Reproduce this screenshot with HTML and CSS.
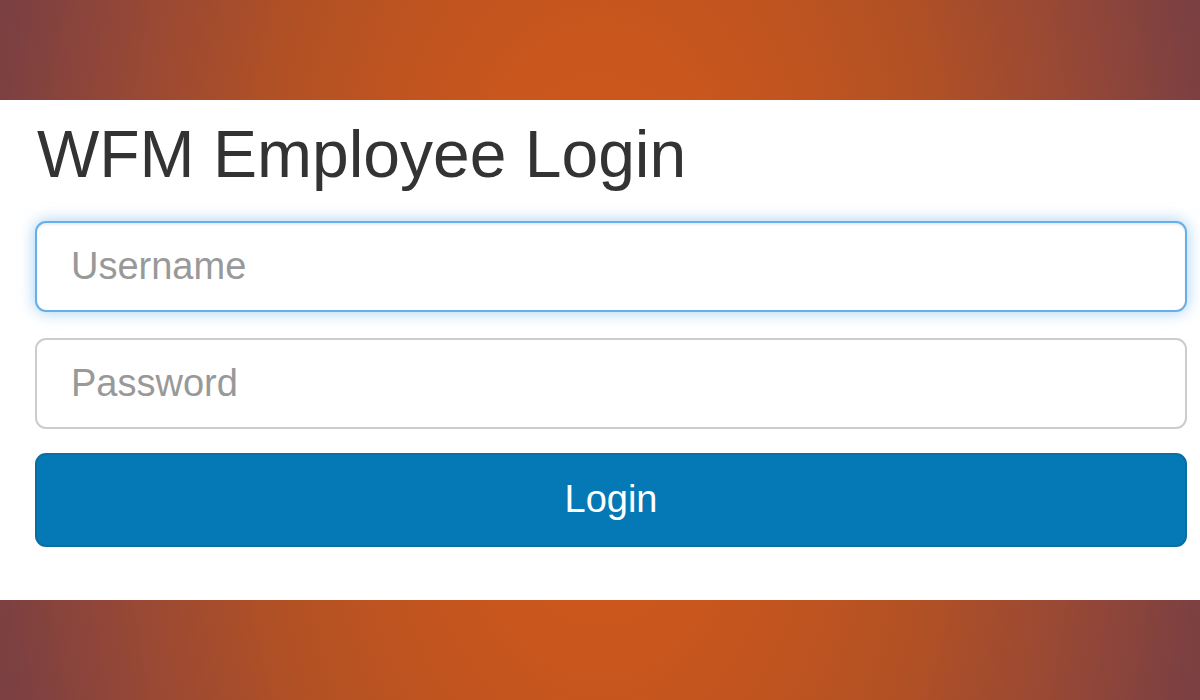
FILE: index.html
```html
<!DOCTYPE html>
<html lang="en">

<head>
  <meta charset="UTF-8">
  <meta name="viewport" content="width=device-width, initial-scale=1.0">
  <title>WFM Employee Login</title>
  <link rel="stylesheet" href="styles.css">
</head>

<body>
  <div class="page">
    <div class="login-box">
      <h2 class="login-title">WFM Employee Login</h2>
      <form class="login-form" onsubmit="return false">
        <input class="field is-focused" type="text" name="username" placeholder="Username" autofocus>
        <input class="field" type="password" name="password" placeholder="Password">
        <button class="login-btn" type="submit">Login</button>
      </form>
    </div>
  </div>
</body>

</html>
```

FILE: styles.css
```css
* {
  margin: 0;
  padding: 0;
  box-sizing: border-box;
}

body {
  font-family: "Liberation Sans", Arial, sans-serif;
  background: radial-gradient(ellipse 680px 1300px at 50% 50%, #d4591a 0%, #c8561d 25%, #b35124 50%, #974835 72%, #7c4042 90%, #784043 100%);
  height: 100vh;
  overflow: hidden;
}

.page {
  padding-top: 100px;
}

.login-box {
  background-color: #ffffff;
  height: 500px;
  padding: 18px 13px 0 35px;
}

.login-title {
  font-size: 66px;
  font-weight: normal;
  line-height: 1.1;
  color: #333333;
  padding-left: 2px;
  margin-bottom: 30px;
}

.login-form {
  display: flex;
  flex-direction: column;
}

.field {
  height: 91px;
  border: 2px solid #cccccc;
  border-radius: 11px;
  padding: 0 34px;
  font-family: inherit;
  font-size: 38px;
  color: #555555;
  background-color: #ffffff;
  outline: none;
  margin-bottom: 26px;
}

.field::placeholder {
  color: #999999;
}

.field.is-focused,
.field:focus {
  border-color: #66afe9;
  box-shadow: inset 0 2px 2px rgba(0, 0, 0, 0.075), 0 0 16px rgba(102, 175, 233, 0.6);
}

.login-btn {
  height: 94px;
  margin-top: -2px;
  border: 2px solid #0a6ea3;
  border-radius: 11px;
  background-color: #0479b6;
  color: #ffffff;
  font-family: inherit;
  font-size: 38px;
  cursor: pointer;
}
```
